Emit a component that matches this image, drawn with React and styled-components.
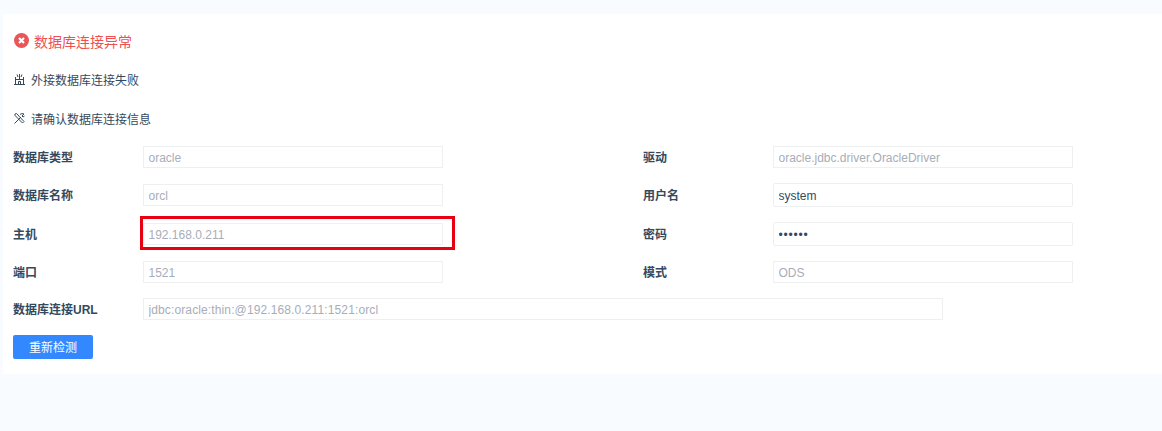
import React from "react";
import styled, { createGlobalStyle } from "styled-components";

const GlobalStyle = createGlobalStyle`
  html, body { margin: 0; padding: 0; background: #f8fbff; }
  body { font-family: "Liberation Sans", "Noto Sans CJK SC", sans-serif; font-size: 12px; color: #34495e; }
`;

const Page = styled.div`
  width: 1162px;
  height: 431px;
  padding: 14px 0 0 3px;
  box-sizing: border-box;
  overflow: hidden;
`;

const Panel = styled.section`
  position: relative;
  height: 360px;
  background: #fff;
  padding: 8px 0 0 10px;
  box-sizing: border-box;
`;

const Message = styled.div`
  display: flex;
  align-items: center;
  height: ${props => props.$height}px;
  color: ${props => (props.$error ? "#ef4f4f" : "#34495e")};
  font-size: ${props => (props.$error ? "14px" : "12px")};
`;

const IconSlot = styled.span`
  display: flex;
  box-sizing: border-box;
  width: ${props => props.$width}px;
  padding-left: 1px;
  margin-bottom: ${props => props.$lift || 0}px;
  flex: none;
`;

const Form = styled.div`
  display: flex;
  flex-direction: column;
  margin-top: 9px;
`;

const Row = styled.div`
  display: flex;
  height: ${props => props.$height}px;
`;

const Column = styled.div`
  display: flex;
  flex: none;
  width: 630px;
  align-items: center;
  height: 22px;
`;

const Label = styled.label`
  width: 130px;
  flex: none;
  padding-bottom: 2px;
  font-weight: bold;
  color: #34495e;
  white-space: nowrap;
`;

const Field = styled.input`
  flex: none;
  width: ${props => (props.$wide ? 800 : 300)}px;
  height: ${props => (props.disabled ? 22 : 24)}px;
  margin: ${props => (props.disabled ? 0 : "-1px 0")};
  box-sizing: border-box;
  padding: 1px 4px 0 4.5px;
  border: 1px solid #eeeff1;
  border-radius: ${props => (props.disabled ? 0 : "2px")};
  background: #fff;
  color: ${props => (props.disabled ? "#a8adb8" : "#34495e")};
  font: 12px "Liberation Sans", "Noto Sans CJK SC", sans-serif;
  letter-spacing: ${props => (props.type === "password" ? "0.8px" : props.$wide ? "0.12px" : "0")};
  outline: none;
  opacity: 1;
  -webkit-text-fill-color: currentColor;
`;

const RetryButton = styled.button`
  display: block;
  width: 80px;
  height: 24px;
  padding: 0 0 2px;
  border: none;
  border-radius: 2px;
  background: #3388ff;
  color: #fff;
  font: 12px "Liberation Sans", "Noto Sans CJK SC", sans-serif;
`;

const Highlight = styled.div`
  position: absolute;
  left: 137px;
  top: 202px;
  width: 315px;
  height: 34px;
  box-sizing: border-box;
  border: 3px solid #e60012;
  pointer-events: none;
`;

const ErrorIcon = () => (
  <svg width="15" height="15" viewBox="0 0 15 15">
    <circle cx="7.5" cy="7.5" r="7.5" fill="#ea5558" />
    <path d="M5 5l5 5M10 5l-5 5" stroke="#fff" strokeWidth="2.2" />
  </svg>
);

const LinkFailIcon = () => (
  <svg width="11" height="11" viewBox="0 0 11 11" fill="none" stroke="#34495e" strokeWidth="1">
    <path d="M0 10.5h11M1.500 10.500V3M9.500 10.500V3M1.500 5.500h8M5.500 0v5.500M3 .5l1 2.500M8 .5L7 3M4.500 10.500V7.500h2v3" />
  </svg>
);

const ToolsIcon = () => (
  <svg width="11" height="11" viewBox="0 0 11 11" fill="none" stroke="#34495e" strokeWidth="1">
    <path d="M.5 10.500L7 4M6 1.500C7 .5 9 .5 10 1L8 3l1 1 1.500-1M1 1l1.500-.5L10 8.500l-1.500 1.500L1 2.500z" />
  </svg>
);

const rows = [
  { height: 38, left: ["数据库类型", "oracle"], right: ["驱动", "oracle.jdbc.driver.OracleDriver", true] },
  { height: 39, left: ["数据库名称", "orcl"], right: ["用户名", "system", false] },
  { height: 38, left: ["主机", "192.168.0.211"], right: ["密码", "123456", false, "password"] },
  { height: 37, left: ["端口", "1521"], right: ["模式", "ODS", true] },
];

const App = () => (
  <Page>
    <GlobalStyle />
    <Panel>
      <Message $error $height={38}>
        <IconSlot $width={21} $lift={2}><ErrorIcon /></IconSlot>
        数据库连接异常
      </Message>
      <Message $height={39}>
        <IconSlot $width={18}><LinkFailIcon /></IconSlot>
        外接数据库连接失败
      </Message>
      <Message $height={38}>
        <IconSlot $width={18}><ToolsIcon /></IconSlot>
        请确认数据库连接信息
      </Message>
      <Form>
        {rows.map(row => (
          <Row key={row.left[0]} $height={row.height}>
            <Column>
              <Label>{row.left[0]}</Label>
              <Field disabled readOnly value={row.left[1]} />
            </Column>
            <Column>
              <Label>{row.right[0]}</Label>
              <Field
                disabled={row.right[2]}
                readOnly
                type={row.right[3] || "text"}
                value={row.right[1]}
              />
            </Column>
          </Row>
        ))}
        <Row $height={37}>
          <Column>
            <Label>数据库连接URL</Label>
            <Field $wide disabled readOnly value="jdbc:oracle:thin:@192.168.0.211:1521:orcl" />
          </Column>
        </Row>
        <RetryButton>重新检测</RetryButton>
      </Form>
      <Highlight />
    </Panel>
  </Page>
);

export default App;
